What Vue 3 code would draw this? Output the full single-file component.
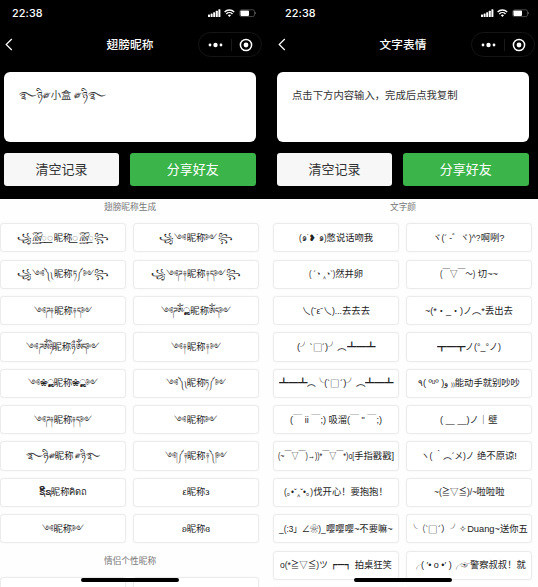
<script setup>
// Each label is a list of runs; a run [text, width] is condensed or widened to that width.
// A third entry of true sets the run in the full-width CJK face.
const panels = [
  {
    title: '翅膀昵称', heading: '翅膀昵称生成', next: '情侣个性昵称',
    input: [['࿐ཉི༗', 31.7], '小盒', [' ༗ཉི࿐', 35.3]],
    items: [
      [['꧁', 15], ['꫞꯭', 15], ['◌꯭', 6.7], '昵称', ['◌꯭', 6.7], ['꫞꯭', 15], ['꧂', 15]],
      [['꧁', 15], ['༺', 12.3], '昵称', ['༻', 12.3], ['꧂', 15]],
      [['꧁', 15], ['༺༽༾', 21.7], '昵称', ['ཏ༼༻', 21.3], ['꧂', 15]],
      [['꧁', 15], ['༺ཌ༈', 20.7], '昵称', ['༈ད༻', 20], ['꧂', 15]],
      [['༺ཌ༈', 20], '昵称', ['༈ད༻', 19]],
      [['༺ཌༀ', 22], ['ൢ', 7], '昵称', ['ༀད༻', 21.7]],
      [['༺ཌༀཉི', 26.7], '昵称', ['ཉྀༀད༻', 29]],
      [['༺༈', 15.7], '昵称', ['༈༻', 15]],
      [['༺', 12], ['❀ൢ', 14], '昵称', ['❀ൢ', 14], ['༻', 12]],
      [['༺༽༾', 21.3], '昵称', ['ཏ༼༻', 21]],
      [['༺ཌ༈', 20], '昵称', ['༈ད༻', 20]],
      [['༺', 12.3], '昵称', ['༻', 12.3]],
      [['࿐ཉི༗', 29.3], '昵称', [' ༗ཉི࿐', 27]],
      [['༺།༼༈', 22.3], '昵称', ['༈༽།༻', 21.7]],
      [['ຊີ້ຊ', 12.3], '昵称', ['คิดถ', 18]],
      ['ε昵称з'],
      [['༺', 11.5], '昵称', ['༻', 12]],
      ['ʚ昵称ɞ'],
    ],
  },
  {
    title: '文字表情', heading: '文字颜', next: '',
    input: ['点击下方内容输入，完成后点我复制'],
    items: [
      [['(๑˙❥˙๑)', 27.7], '憋说话吻我'],
      [['ヾ(´ -゛ヾ)^?', 47.3], '啊咧?'],
      [['( ´◔ ‸◔`)', 26.3], '然并卵'],
      [['(￣▽￣～)', 35.3], ' 切~~'],
      [['乀(ˉεˉ乀)...', 40], '去去去'],
      [['~(*・_・)ノ︵*', 59.7], '丢出去'],
      [['(╯`', 15.5], ['□', 9.5, true], ['´)╯︵', 24.5], ['┻━┻', 28.5]],
      [['┳━┳', 28.5], ['ノ(°_°ノ)', 36]],
      [['┻━┻', 28.5], ['︵╰(`', 23], ['□', 9.5, true], ['´)╯︵', 25.5], ['┻━┻', 28.5]],
      [['٩( ºᵘº )و ₎₎', 36.7], '能动手就别吵吵'],
      [['(￣ ii ￣;)', 36], ' 吸溜', ['(￣ " ￣;)', 35]],
      [['( ＿ ＿)ノ｜', 48], '壁'],
      [['(~￣▽￣)→))*￣▽￣*)o[', 76.3], '手指戳戳]'],
      [['ヽ( ｀︵´メ)ノ', 53.3], ' 绝不原谅!'],
      [['(｡•ˇ‸ˇ•｡)', 29], '伐开心！要抱抱！'],
      [['~(≧▽≦)/~', 43], '啦啦啦'],
      [['_(:3」∠❀)_', 46.7], '嘤嘤嘤~不要嘛~'],
      [['╰（`', 18], ['□', 9.5, true], ['´）╯', 21.5], '✧Duang~送你五'],
      [['o(*≧▽≦)ツ', 47.7], ' ', ['┏━┓', 21.7], ' 拍桌狂笑'],
      [['╭( ′• o •′ )╭☞', 57.7], '警察叔叔！就'],
    ],
  },
]

const vFit = {
  mounted(el, { value }) {
    if (!value) return
    const natural = el.offsetWidth ? el.getBoundingClientRect().width : 0
    if (!natural) return
    el.style.width = `${natural}px`
    el.style.transform = `scaleX(${value / natural})`
    el.style.marginRight = `${value - natural}px`
  },
}
const text = (run) => (Array.isArray(run) ? run[0] : run)
const width = (run) => (Array.isArray(run) ? run[1] : 0)
const wide = (run) => Array.isArray(run) && run[2] === true
</script>

<template>
  <main class="page">
    <section v-for="p in panels" :key="p.title" class="phone">
      <header class="top">
        <div class="status">
          <span class="time">22:38</span>
          <svg class="signals" width="48" height="9" viewBox="0 0 48 9">
            <g fill="#fff">
              <rect x="0" y="5.5" width="2" height="2.5" rx=".5" />
              <rect x="2.6" y="4.5" width="2" height="3.5" rx=".5" />
              <rect x="5.2" y="3.2" width="2" height="4.8" rx=".5" />
              <rect x="7.8" y="1.8" width="2" height="6.2" rx=".5" />
              <rect x="10.4" y="0.2" width="2" height="7.8" rx=".5" />
              <path d="M19.8 6.3a2.2 2.2 0 0 1 3.2 0L21.4 8z" />
              <rect x="32.4" y="1.5" width="8.6" height="5.4" rx=".8" />
              <path d="M47.2 2.9v2.4q.8-.4.8-1.2t-.8-1.2z" fill="#777" />
            </g>
            <g fill="none" stroke="#fff" stroke-width="1.4">
              <path d="M16.6 3a6.8 6.8 0 0 1 9.6 0" />
              <path d="M18.3 4.9a4.4 4.4 0 0 1 6.2 0" />
              <rect x="31.7" y=".8" width="14.8" height="6.8" rx="1.8" stroke="#666" stroke-width=".7" />
            </g>
          </svg>
        </div>
        <nav class="nav">
          <svg class="back" width="8" height="13" viewBox="0 0 8 13">
            <path d="M6.8 1L1.2 6.5l5.6 5.5" fill="none" stroke="#fff" stroke-width="1.2" />
          </svg>
          <h1>{{ p.title }}</h1>
          <div class="capsule">
            <svg width="15" height="6" viewBox="0 0 15 6" fill="#fff">
              <circle cx="2" cy="3" r="1.4" /><circle cx="7.5" cy="3" r="2.2" /><circle cx="13" cy="3" r="1.4" />
            </svg>
            <i class="divider"></i>
            <svg width="14" height="14" viewBox="0 0 14 14">
              <circle cx="7" cy="7" r="5.6" fill="none" stroke="#fff" stroke-width="1.5" />
              <circle cx="7" cy="7" r="2.4" fill="#fff" />
            </svg>
          </div>
        </nav>
        <div class="input">
          <span v-for="(r, i) in p.input" :key="i" v-fit="width(r)" class="run">{{ text(r) }}</span>
        </div>
        <div class="actions">
          <button class="clear">清空记录</button>
          <button class="share">分享好友</button>
        </div>
      </header>
      <h2>{{ p.heading }}</h2>
      <div class="grid">
        <div v-for="(runs, i) in p.items" :key="i" class="item">
          <span v-for="(r, j) in runs" :key="j" v-fit="width(r)" class="run" :class="{ wide: wide(r) }">{{ text(r) }}</span>
        </div>
      </div>
      <h2 v-if="p.next" class="second">{{ p.next }}</h2>
      <div class="grid"><div class="item"></div><div class="item"></div></div>
      <div class="home"></div>
    </section>
  </main>
</template>

<style>
body { margin: 0; overflow: hidden; }
</style>
<style scoped>
.page {
  display: flex;
  gap: 13px;
  width: 538px;
  height: 587px;
  overflow: hidden;
  background: linear-gradient(#000 199px, #fefefe 199px);
  font-family: "Liberation Sans", "Noto Sans CJK SC", sans-serif;
}
.phone { position: relative; width: 260px; flex: none; height: 587px; }
.top { height: 199px; color: #fff; }
.status { display: flex; align-items: center; justify-content: space-between; height: 27px; padding: 0 4.5px 0 12px; box-sizing: border-box; }
.time { font: 500 10.8px Inter, sans-serif; letter-spacing: .1px; }
.nav { display: grid; grid-template-columns: 62.5px 1fr 64px; align-items: center; height: 35px; margin-right: -1.5px; }
.back { margin-left: 4.7px; }
h1 { margin: 0; font-size: 11.7px; font-weight: 500; text-align: center; line-height: 16px; }
.capsule { display: flex; align-items: center; justify-content: space-between; box-sizing: border-box; height: 24.5px; padding: 0 8px 0 9px; border: 1px solid #151515; border-radius: 13px; }
.divider { width: 1px; height: 12px; margin-left: 2px; background: #1a1a1a; }
.input { display: flex; box-sizing: border-box; height: 70.5px; margin: 9.5px 4.5px 0 4px; padding: 16.5px 15px; border-radius: 6px; background: #fff; color: #333; font-size: 10.35px; line-height: 15px; }
.actions { display: grid; grid-template-columns: 115px 125.5px; gap: 11px; margin: 10.5px 0 0 4px; }
button { height: 33.7px; padding: 0 0 1px; border: 0; border-radius: 3px; font: 13px "Noto Sans CJK SC", sans-serif; }
.clear { background: #f7f7f7; color: #333; }
.share { background: #3bb44a; color: #fff; }
h2 { margin: 0; height: 24.2px; color: #777; font-size: 8.7px; font-weight: 400; text-align: center; line-height: 16px; }
.grid { display: grid; grid-template-columns: 126px 126px; grid-auto-rows: 29.2px; gap: 7.2px 7px; }
.item {
  display: flex;
  align-items: center;
  justify-content: center;
  box-sizing: border-box;
  overflow: hidden;
  border: 1px solid #ebebeb;
  border-radius: 3.5px;
  background: #fff;
  box-shadow: 0 0 2px #f1f1f1;
  color: #222;
  font-size: 9.3px;
  line-height: 14px;
}
.run { display: block; flex: none; white-space: pre; transform-origin: 0 50%; }
.wide { font-family: "Noto Sans CJK SC", sans-serif; }
.second { height: 34px; line-height: 36px; }
.grid + .grid { margin-top: 7.2px; }
.home { position: absolute; left: 81px; top: 578.3px; width: 98px; height: 4px; border-radius: 2px; background: #000; }
</style>
